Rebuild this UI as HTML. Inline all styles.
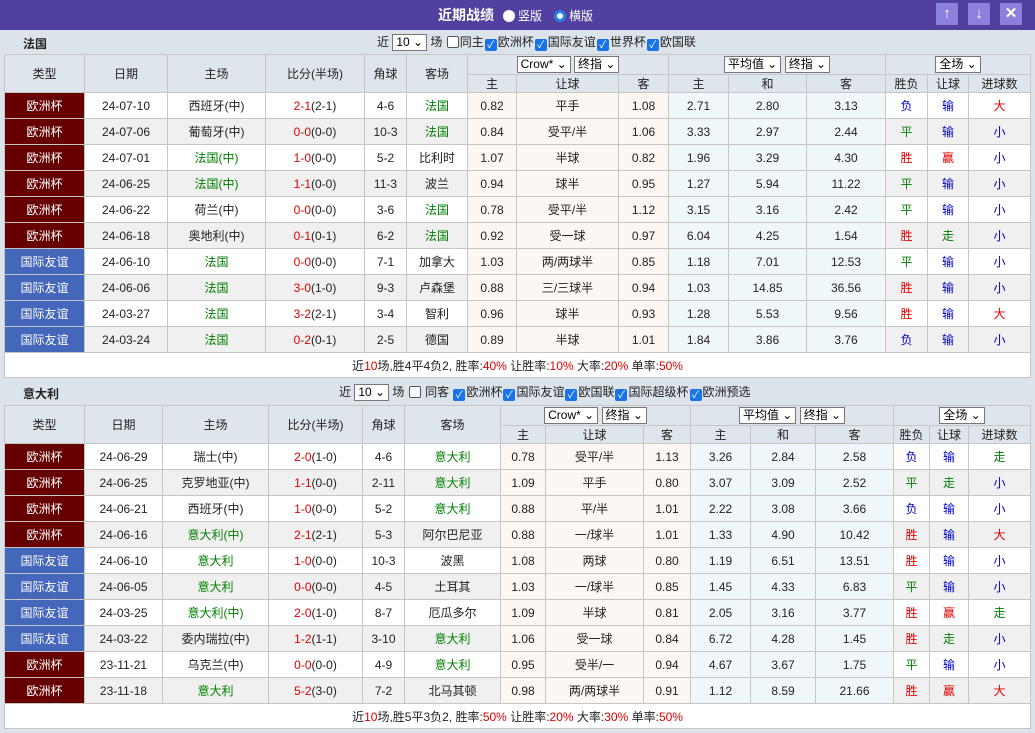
<!DOCTYPE html><html><head><meta charset="utf-8"><style>
*{box-sizing:border-box}
body{margin:0;width:1035px;height:733px;background:#dce3eb;font-family:"Liberation Sans","Noto Sans CJK SC",sans-serif;font-size:12px;color:#222;position:relative;overflow:hidden}
.top{position:absolute;left:0;top:0;width:1035px;height:30px;background:#5140a0}
.top .t{position:absolute;left:438px;top:5px;color:#fff;font-weight:bold;font-size:14px}
.top .r{position:absolute;top:7px;color:#fff;font-size:12px}
.rad{display:inline-block;width:12px;height:12px;border-radius:50%;background:#fff;vertical-align:-2px;margin-right:3px}
.rad.on{background:#fff;border:3px solid #2a7de1}
.btn{position:absolute;top:3px;width:22px;height:22px;background:#8c80dc;color:#fff;text-align:center;font-size:15px;line-height:22px;font-weight:bold}
.ttl{position:absolute;left:0;width:1035px;height:24px}
.ttl b{position:absolute;left:23px;top:4px;font-size:12px}
.ctl{position:absolute;top:2px;font-size:12px;white-space:nowrap}
.sel{display:inline-block;border:1px solid #777;background:#fff;height:17px;line-height:15px;padding:0 3px;font-size:12px;vertical-align:middle;color:#000}
.cb{display:inline-block;width:12px;height:12px;border:1px solid #555;border-radius:2px;background:#fff;vertical-align:-2px;margin:0 1px}
.cb.on{background:#1a73e8;border-color:#1a73e8;color:#fff;font-size:10px;line-height:11px;text-align:center}
table{position:absolute;left:4px;border-collapse:collapse;table-layout:fixed;width:1027px;background:#fff}
td{border:1px solid #c6c6c6;text-align:center;font-size:12px;padding:0;white-space:nowrap;overflow:hidden;height:26px;background:#fff}
tr.h td{background:#dfe5ec;height:20px}
tr.h2 td{background:#dfe5ec;height:18px}
tr.g td{background:#f0f0f0}
td.a,tr.g td.a{background:#fdf7f3}
td.e,tr.g td.e{background:#f0f7fb}
td.eu,tr.g td.eu{background:#660000;color:#fff}
td.fr,tr.g td.fr{background:#4466bb;color:#fff}
.s{color:#dd0000}.gr{color:#008000}.rd{color:#e00000}.bl{color:#0000cc}
td.sum{background:#fff;height:25px}
</style></head><body>
<div class="top"><span class="t">近期战绩</span><span class="r" style="left:503px"><span class="rad"></span>竖版</span><span class="r" style="left:554px"><span class="rad on"></span>横版</span>
<div class="btn" style="left:936px">↑</div><div class="btn" style="left:968px">↓</div><div class="btn" style="left:1000px">✕</div></div>

<div class="ttl" style="top:31px"><b>法国</b><div class="ctl" style="left:377px">近 <span class="sel">10 ⌄</span> 场 <span class="cb"></span>同主<span class="cb on">✓</span>欧洲杯<span class="cb on">✓</span>国际友谊<span class="cb on">✓</span>世界杯<span class="cb on">✓</span>欧国联</div></div>
<table style="top:54px">
<colgroup><col width="80"><col width="83"><col width="98"><col width="99"><col width="42"><col width="61"><col width="49"><col width="102"><col width="50"><col width="60"><col width="78"><col width="79"><col width="42"><col width="41"><col width="62"></colgroup>
<tr class="h"><td rowspan="2">类型</td><td rowspan="2">日期</td><td rowspan="2">主场</td><td rowspan="2">比分(半场)</td><td rowspan="2">角球</td><td rowspan="2">客场</td><td colspan="3"><span class="sel">Crow* ⌄</span> <span class="sel">终指 ⌄</span></td><td colspan="3"><span class="sel">平均值 ⌄</span> <span class="sel">终指 ⌄</span></td><td colspan="3"><span class="sel">全场 ⌄</span></td></tr>
<tr class="h2"><td>主</td><td>让球</td><td>客</td><td>主</td><td>和</td><td>客</td><td>胜负</td><td>让球</td><td>进球数</td></tr>
<tr><td class="eu">欧洲杯</td><td>24-07-10</td><td>西班牙(中)</td><td><span class="s">2-1</span>(2-1)</td><td>4-6</td><td class="gr">法国</td><td class="a">0.82</td><td class="a">平手</td><td class="a">1.08</td><td class="e">2.71</td><td class="e">2.80</td><td class="e">3.13</td><td class="bl">负</td><td class="bl">输</td><td class="rd">大</td></tr>
<tr class="g"><td class="eu">欧洲杯</td><td>24-07-06</td><td>葡萄牙(中)</td><td><span class="s">0-0</span>(0-0)</td><td>10-3</td><td class="gr">法国</td><td class="a">0.84</td><td class="a">受平/半</td><td class="a">1.06</td><td class="e">3.33</td><td class="e">2.97</td><td class="e">2.44</td><td class="gr">平</td><td class="bl">输</td><td class="bl">小</td></tr>
<tr><td class="eu">欧洲杯</td><td>24-07-01</td><td class="gr">法国(中)</td><td><span class="s">1-0</span>(0-0)</td><td>5-2</td><td>比利时</td><td class="a">1.07</td><td class="a">半球</td><td class="a">0.82</td><td class="e">1.96</td><td class="e">3.29</td><td class="e">4.30</td><td class="rd">胜</td><td class="rd">赢</td><td class="bl">小</td></tr>
<tr class="g"><td class="eu">欧洲杯</td><td>24-06-25</td><td class="gr">法国(中)</td><td><span class="s">1-1</span>(0-0)</td><td>11-3</td><td>波兰</td><td class="a">0.94</td><td class="a">球半</td><td class="a">0.95</td><td class="e">1.27</td><td class="e">5.94</td><td class="e">11.22</td><td class="gr">平</td><td class="bl">输</td><td class="bl">小</td></tr>
<tr><td class="eu">欧洲杯</td><td>24-06-22</td><td>荷兰(中)</td><td><span class="s">0-0</span>(0-0)</td><td>3-6</td><td class="gr">法国</td><td class="a">0.78</td><td class="a">受平/半</td><td class="a">1.12</td><td class="e">3.15</td><td class="e">3.16</td><td class="e">2.42</td><td class="gr">平</td><td class="bl">输</td><td class="bl">小</td></tr>
<tr class="g"><td class="eu">欧洲杯</td><td>24-06-18</td><td>奥地利(中)</td><td><span class="s">0-1</span>(0-1)</td><td>6-2</td><td class="gr">法国</td><td class="a">0.92</td><td class="a">受一球</td><td class="a">0.97</td><td class="e">6.04</td><td class="e">4.25</td><td class="e">1.54</td><td class="rd">胜</td><td class="gr">走</td><td class="bl">小</td></tr>
<tr><td class="fr">国际友谊</td><td>24-06-10</td><td class="gr">法国</td><td><span class="s">0-0</span>(0-0)</td><td>7-1</td><td>加拿大</td><td class="a">1.03</td><td class="a">两/两球半</td><td class="a">0.85</td><td class="e">1.18</td><td class="e">7.01</td><td class="e">12.53</td><td class="gr">平</td><td class="bl">输</td><td class="bl">小</td></tr>
<tr class="g"><td class="fr">国际友谊</td><td>24-06-06</td><td class="gr">法国</td><td><span class="s">3-0</span>(1-0)</td><td>9-3</td><td>卢森堡</td><td class="a">0.88</td><td class="a">三/三球半</td><td class="a">0.94</td><td class="e">1.03</td><td class="e">14.85</td><td class="e">36.56</td><td class="rd">胜</td><td class="bl">输</td><td class="bl">小</td></tr>
<tr><td class="fr">国际友谊</td><td>24-03-27</td><td class="gr">法国</td><td><span class="s">3-2</span>(2-1)</td><td>3-4</td><td>智利</td><td class="a">0.96</td><td class="a">球半</td><td class="a">0.93</td><td class="e">1.28</td><td class="e">5.53</td><td class="e">9.56</td><td class="rd">胜</td><td class="bl">输</td><td class="rd">大</td></tr>
<tr class="g"><td class="fr">国际友谊</td><td>24-03-24</td><td class="gr">法国</td><td><span class="s">0-2</span>(0-1)</td><td>2-5</td><td>德国</td><td class="a">0.89</td><td class="a">半球</td><td class="a">1.01</td><td class="e">1.84</td><td class="e">3.86</td><td class="e">3.76</td><td class="bl">负</td><td class="bl">输</td><td class="bl">小</td></tr>
<tr><td colspan="15" class="sum">近<span class="s">10</span>场,胜4平4负2, 胜率:<span class="s">40%</span> 让胜率:<span class="s">10%</span> 大率:<span class="s">20%</span> 单率:<span class="s">50%</span></td></tr>
</table>

<div class="ttl" style="top:381px"><b>意大利</b><div class="ctl" style="left:339px">近 <span class="sel">10 ⌄</span> 场 <span class="cb"></span> 同客 <span class="cb on">✓</span>欧洲杯<span class="cb on">✓</span>国际友谊<span class="cb on">✓</span>欧国联<span class="cb on">✓</span>国际超级杯<span class="cb on">✓</span>欧洲预选</div></div>
<table style="top:405px">
<colgroup><col width="80"><col width="78"><col width="106"><col width="94"><col width="42"><col width="96"><col width="45"><col width="98"><col width="47"><col width="60"><col width="65"><col width="78"><col width="36"><col width="39"><col width="62"></colgroup>
<tr class="h"><td rowspan="2">类型</td><td rowspan="2">日期</td><td rowspan="2">主场</td><td rowspan="2">比分(半场)</td><td rowspan="2">角球</td><td rowspan="2">客场</td><td colspan="3"><span class="sel">Crow* ⌄</span> <span class="sel">终指 ⌄</span></td><td colspan="3"><span class="sel">平均值 ⌄</span> <span class="sel">终指 ⌄</span></td><td colspan="3"><span class="sel">全场 ⌄</span></td></tr>
<tr class="h2"><td>主</td><td>让球</td><td>客</td><td>主</td><td>和</td><td>客</td><td>胜负</td><td>让球</td><td>进球数</td></tr>
<tr><td class="eu">欧洲杯</td><td>24-06-29</td><td>瑞士(中)</td><td><span class="s">2-0</span>(1-0)</td><td>4-6</td><td class="gr">意大利</td><td class="a">0.78</td><td class="a">受平/半</td><td class="a">1.13</td><td class="e">3.26</td><td class="e">2.84</td><td class="e">2.58</td><td class="bl">负</td><td class="bl">输</td><td class="gr">走</td></tr>
<tr class="g"><td class="eu">欧洲杯</td><td>24-06-25</td><td>克罗地亚(中)</td><td><span class="s">1-1</span>(0-0)</td><td>2-11</td><td class="gr">意大利</td><td class="a">1.09</td><td class="a">平手</td><td class="a">0.80</td><td class="e">3.07</td><td class="e">3.09</td><td class="e">2.52</td><td class="gr">平</td><td class="gr">走</td><td class="bl">小</td></tr>
<tr><td class="eu">欧洲杯</td><td>24-06-21</td><td>西班牙(中)</td><td><span class="s">1-0</span>(0-0)</td><td>5-2</td><td class="gr">意大利</td><td class="a">0.88</td><td class="a">平/半</td><td class="a">1.01</td><td class="e">2.22</td><td class="e">3.08</td><td class="e">3.66</td><td class="bl">负</td><td class="bl">输</td><td class="bl">小</td></tr>
<tr class="g"><td class="eu">欧洲杯</td><td>24-06-16</td><td class="gr">意大利(中)</td><td><span class="s">2-1</span>(2-1)</td><td>5-3</td><td>阿尔巴尼亚</td><td class="a">0.88</td><td class="a">一/球半</td><td class="a">1.01</td><td class="e">1.33</td><td class="e">4.90</td><td class="e">10.42</td><td class="rd">胜</td><td class="bl">输</td><td class="rd">大</td></tr>
<tr><td class="fr">国际友谊</td><td>24-06-10</td><td class="gr">意大利</td><td><span class="s">1-0</span>(0-0)</td><td>10-3</td><td>波黑</td><td class="a">1.08</td><td class="a">两球</td><td class="a">0.80</td><td class="e">1.19</td><td class="e">6.51</td><td class="e">13.51</td><td class="rd">胜</td><td class="bl">输</td><td class="bl">小</td></tr>
<tr class="g"><td class="fr">国际友谊</td><td>24-06-05</td><td class="gr">意大利</td><td><span class="s">0-0</span>(0-0)</td><td>4-5</td><td>土耳其</td><td class="a">1.03</td><td class="a">一/球半</td><td class="a">0.85</td><td class="e">1.45</td><td class="e">4.33</td><td class="e">6.83</td><td class="gr">平</td><td class="bl">输</td><td class="bl">小</td></tr>
<tr><td class="fr">国际友谊</td><td>24-03-25</td><td class="gr">意大利(中)</td><td><span class="s">2-0</span>(1-0)</td><td>8-7</td><td>厄瓜多尔</td><td class="a">1.09</td><td class="a">半球</td><td class="a">0.81</td><td class="e">2.05</td><td class="e">3.16</td><td class="e">3.77</td><td class="rd">胜</td><td class="rd">赢</td><td class="gr">走</td></tr>
<tr class="g"><td class="fr">国际友谊</td><td>24-03-22</td><td>委内瑞拉(中)</td><td><span class="s">1-2</span>(1-1)</td><td>3-10</td><td class="gr">意大利</td><td class="a">1.06</td><td class="a">受一球</td><td class="a">0.84</td><td class="e">6.72</td><td class="e">4.28</td><td class="e">1.45</td><td class="rd">胜</td><td class="gr">走</td><td class="bl">小</td></tr>
<tr><td class="eu">欧洲杯</td><td>23-11-21</td><td>乌克兰(中)</td><td><span class="s">0-0</span>(0-0)</td><td>4-9</td><td class="gr">意大利</td><td class="a">0.95</td><td class="a">受半/一</td><td class="a">0.94</td><td class="e">4.67</td><td class="e">3.67</td><td class="e">1.75</td><td class="gr">平</td><td class="bl">输</td><td class="bl">小</td></tr>
<tr class="g"><td class="eu">欧洲杯</td><td>23-11-18</td><td class="gr">意大利</td><td><span class="s">5-2</span>(3-0)</td><td>7-2</td><td>北马其顿</td><td class="a">0.98</td><td class="a">两/两球半</td><td class="a">0.91</td><td class="e">1.12</td><td class="e">8.59</td><td class="e">21.66</td><td class="rd">胜</td><td class="rd">赢</td><td class="rd">大</td></tr>
<tr><td colspan="15" class="sum">近<span class="s">10</span>场,胜5平3负2, 胜率:<span class="s">50%</span> 让胜率:<span class="s">20%</span> 大率:<span class="s">30%</span> 单率:<span class="s">50%</span></td></tr>
</table>
</body></html>
